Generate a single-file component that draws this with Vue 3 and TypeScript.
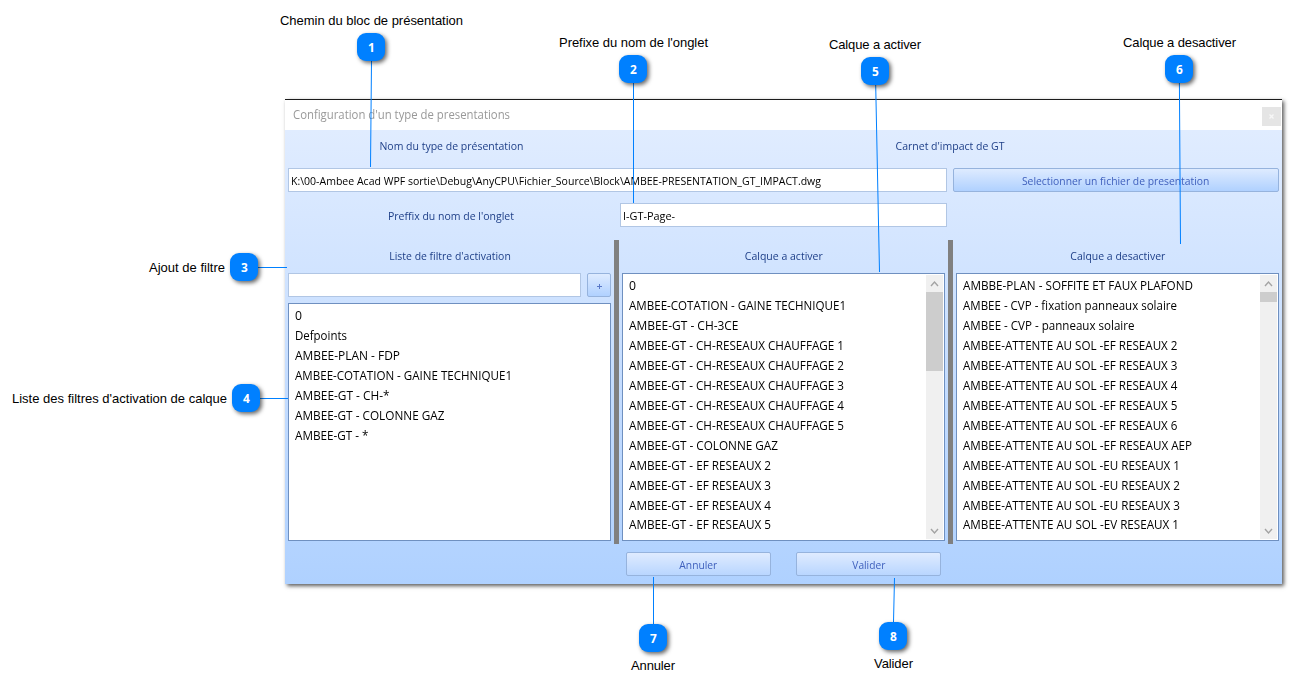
<script setup lang="ts">
type Line = { text: string; w: number }
type Callout = {
  n: number; x: number; y: number; label: string
  tx: number; ty: number; w: number; line: [number, number, number, number]
}

// Narrows or widens a label horizontally to the given width.
const vFit = {
  mounted(el: HTMLElement, binding: { value: number }) {
    const natural = el.offsetWidth ? el.getBoundingClientRect().width : 0
    if (natural) el.style.transform = `scaleX(${binding.value / natural})`
  },
}

const filters: Line[] = [
  { text: '0', w: 7 },
  { text: 'Defpoints', w: 52 },
  { text: 'AMBEE-PLAN - FDP', w: 105 },
  { text: 'AMBEE-COTATION - GAINE TECHNIQUE1', w: 217 },
  { text: 'AMBEE-GT - CH-*', w: 94.5 },
  { text: 'AMBEE-GT - COLONNE GAZ', w: 149.5 },
  { text: 'AMBEE-GT - *', w: 73.5 },
]
const enabled: Line[] = [
  { text: '0', w: 7 },
  { text: 'AMBEE-COTATION - GAINE TECHNIQUE1', w: 217 },
  { text: 'AMBEE-GT - CH-3CE', w: 109.5 },
  ...[1, 2, 3, 4, 5].map((i) => ({ text: `AMBEE-GT - CH-RESEAUX CHAUFFAGE ${i}`, w: 215 })),
  { text: 'AMBEE-GT - COLONNE GAZ', w: 149 },
  ...[2, 3, 4, 5].map((i) => ({ text: `AMBEE-GT - EF RESEAUX ${i}`, w: 142 })),
]
const disabled: Line[] = [
  { text: 'AMBBE-PLAN - SOFFITE ET FAUX PLAFOND', w: 230 },
  { text: 'AMBEE - CVP - fixation panneaux solaire', w: 214 },
  { text: 'AMBEE - CVP - panneaux solaire', w: 171.5 },
  ...[2, 3, 4, 5, 6].map((i) => ({ text: `AMBEE-ATTENTE AU SOL -EF RESEAUX ${i}`, w: 214.5 })),
  { text: 'AMBEE-ATTENTE AU SOL -EF RESEAUX AEP', w: 229 },
  ...[1, 2, 3].map((i) => ({ text: `AMBEE-ATTENTE AU SOL -EU RESEAUX ${i}`, w: 217 })),
  { text: 'AMBEE-ATTENTE AU SOL -EV RESEAUX 1', w: 216 },
]
const panels = [
  { title: 'Calque a activer', w: 78, items: enabled, thumb: 79 },
  { title: 'Calque a desactiver', w: 95, items: disabled, thumb: 10 },
]

const callouts: Callout[] = [
  { n: 1, x: 357, y: 33, label: 'Chemin du bloc de présentation', tx: 280, ty: 25, w: 183, line: [371.5, 61, 370.5, 167] },
  { n: 2, x: 619, y: 55, label: "Prefixe du nom de l'onglet", tx: 559, ty: 47, w: 149, line: [633.5, 83, 633.5, 203] },
  { n: 3, x: 230, y: 253, label: 'Ajout de filtre', tx: 149, ty: 272, w: 76, line: [258, 267.5, 287, 267.5] },
  { n: 4, x: 232, y: 384, label: "Liste des filtres d'activation de calque", tx: 12, ty: 403, w: 215, line: [260, 398.5, 288, 398.5] },
  { n: 5, x: 861, y: 57, label: 'Calque a activer', tx: 829, ty: 49, w: 92, line: [875.7, 85, 879.5, 272] },
  { n: 6, x: 1165, y: 55, label: 'Calque a desactiver', tx: 1123, ty: 47, w: 113, line: [1179.4, 83, 1180.5, 244] },
  { n: 7, x: 639, y: 624, label: 'Annuler', tx: 631, ty: 670, w: 44, line: [653.5, 577, 653.5, 624] },
  { n: 8, x: 879, y: 622, label: 'Valider', tx: 874, ty: 668, w: 39, line: [894.5, 578, 893.5, 622] },
]
</script>

<template>
  <main class="page">
    <section class="window">
      <header class="titlebar">
        <span v-fit="217" class="fit left">Configuration d'un type de presentations</span>
        <span class="close">
          <svg width="5" height="5" viewBox="0 0 5 5"><path d="M.5 .5 4.5 4.5M4.5 .5 .5 4.5" stroke="#f7f7f7" stroke-width="1.3" /></svg>
        </span>
      </header>
      <div class="body">
        <div class="row names">
          <div class="third"><span v-fit="144" class="fit">Nom du type de présentation</span></div>
          <div class="rest"><span v-fit="109" class="fit">Carnet d'impact de GT</span></div>
        </div>
        <div class="row source">
          <div class="field path"><span v-fit="530" class="fit left">K:\00-Ambee Acad WPF sortie\Debug\AnyCPU\Fichier_Source\Block\AMBEE-PRESENTATION_GT_IMPACT.dwg</span></div>
          <div class="btn pick"><span v-fit="187.5" class="fit">Selectionner un fichier de presentation</span></div>
        </div>
        <div class="row prefix">
          <div class="third"><span v-fit="126" class="fit">Preffix du nom de l'onglet</span></div>
          <div class="field short"><span v-fit="52" class="fit left">I-GT-Page-</span></div>
        </div>
        <div class="columns">
          <div class="column">
            <div class="head"><span v-fit="121.5" class="fit">Liste de filtre d'activation</span></div>
            <div class="adder">
              <div class="field add"></div>
              <div class="btn plus"><svg width="5" height="5" viewBox="0 0 5 5"><path d="M2.5 0v5M0 2.5h5" stroke="#5a78c8" /></svg></div>
            </div>
            <div class="list">
              <ul><li v-for="item in filters" :key="item.text"><span v-fit="item.w" class="fit left">{{ item.text }}</span></li></ul>
            </div>
          </div>
          <template v-for="panel in panels" :key="panel.title">
            <div class="splitter"></div>
            <div class="column">
              <div class="head"><span v-fit="panel.w" class="fit">{{ panel.title }}</span></div>
              <div class="list">
                <ul><li v-for="item in panel.items" :key="item.text"><span v-fit="item.w" class="fit left">{{ item.text }}</span></li></ul>
                <div class="scroll">
                  <svg width="17" height="17"><path d="m5 11 3.5-4 3.5 4" fill="none" stroke="#a3a3a3" stroke-width="1.4" /></svg>
                  <div class="thumb" :style="{ height: panel.thumb + 'px' }"></div>
                  <svg class="down" width="17" height="17"><path d="m5 7 3.5 4 3.5-4" fill="none" stroke="#a3a3a3" stroke-width="1.4" /></svg>
                </div>
              </div>
            </div>
          </template>
        </div>
        <footer class="actions">
          <div class="btn"><span v-fit="38" class="fit">Annuler</span></div>
          <div class="btn"><span v-fit="33" class="fit">Valider</span></div>
        </footer>
      </div>
    </section>

    <svg class="callouts" width="1292" height="689" viewBox="0 0 1292 689">
      <g v-for="c in callouts" :key="c.n">
        <line :x1="c.line[0]" :y1="c.line[1]" :x2="c.line[2]" :y2="c.line[3]" />
        <rect class="badge" :x="c.x" :y="c.y" width="28" height="28" rx="9" />
        <text class="num" :x="c.x + 11" :y="c.y + 18.5" textLength="6.8" lengthAdjust="spacingAndGlyphs">{{ c.n }}</text>
        <text class="label" :x="c.tx" :y="c.ty" :textLength="c.w">{{ c.label }}</text>
      </g>
    </svg>
  </main>
</template>

<style>
body { margin: 0; background: #fff; }
</style>

<style scoped>
.page {
  position: relative;
  box-sizing: border-box;
  width: 1292px;
  height: 689px;
  padding: 99px 0 0 285px;
  overflow: hidden;
  background: #fff;
  font-family: "Open Sans", "Noto Sans", sans-serif;
  font-size: 11px;
  color: #1e3f88;
}
.window {
  box-sizing: border-box;
  width: 997px;
  height: 485px;
  border-top: 1px solid #1c1c1c;
  box-shadow: 2px 2px 4px rgba(0, 0, 0, .65);
}
.fit { display: inline-block; flex: none; white-space: pre; line-height: 16px; transform-origin: center; }
.fit.left { transform-origin: left center; }
.titlebar {
  box-sizing: border-box;
  display: flex;
  justify-content: space-between;
  height: 30px;
  padding: 7px 1px 0 8px;
  background: #fff;
  color: #999;
  font-size: 12px;
}
.close { display: flex; align-items: center; justify-content: center; width: 19px; height: 19px; background: #e5e5e5; }
.body { height: 454px; background: linear-gradient(#e0ecff, #afd1ff); }
.row { display: flex; }
.third { display: flex; align-items: center; justify-content: center; width: 332px; }
.rest { display: flex; align-items: center; justify-content: center; flex: 1; padding-left: 1px; }
.names { height: 32px; }
.source { gap: 6px; padding: 6px 3px 0; }
.prefix { gap: 3px; padding-top: 11px; }
.prefix .third { box-sizing: border-box; padding-top: 2px; }
.field { box-sizing: border-box; display: flex; align-items: center; height: 24px; padding: 2px 2px 0; border: 1px solid #b1c6e4; background: #fff; color: #000; }
.path { width: 659px; }
.short { width: 327px; }
.btn {
  box-sizing: border-box;
  display: flex;
  align-items: center;
  justify-content: center;
  height: 24px;
  padding-top: 2px;
  border: 1px solid #96b3dd;
  border-radius: 2px;
  background: linear-gradient(#deebff, #b0d1ff);
  color: #3f60bd;
}
.pick { width: 326px; }
.columns { display: flex; height: 304px; margin-top: 13px; }
.column { box-sizing: border-box; display: flex; flex-direction: column; width: 329px; padding: 0 3px 3px; }
.splitter { width: 5px; background: #808080; }
.head { box-sizing: border-box; display: flex; align-items: center; justify-content: center; height: 33px; padding: 0 0 1px 1px; }
.adder { display: flex; gap: 6px; margin-bottom: 6px; }
.add { width: 293px; }
.plus { width: 24px; }
.list { box-sizing: border-box; display: flex; flex: 1; min-height: 0; padding: 1px; border: 1px solid #6f90c0; background: #fff; }
.list ul { flex: 1; min-width: 0; margin: 0; padding: 1px 0 0 5px; list-style: none; overflow: hidden; color: #000; font-size: 12px; }
.list li { display: flex; align-items: center; height: 20px; }
.list li:nth-child(13) { height: 18px; }
.scroll { display: flex; flex-direction: column; width: 17px; background: #f0f0f0; }
.scroll svg { display: block; flex: none; }
.thumb { flex: none; background: #cdcdcd; }
.down { margin-top: auto; }
.actions { display: flex; gap: 25px; padding: 8px 0 0 341px; }
.actions .btn { width: 145px; background: linear-gradient(#dfebff, #b9d6ff); }
.callouts { position: absolute; inset: 0; }
.callouts line { stroke: #0080ff; stroke-width: 1; }
.badge { fill: #0080ff; filter: drop-shadow(2px 2px 2px rgba(0, 0, 0, .6)); }
.num { fill: #fff; font: bold 12px "Open Sans", sans-serif; }
.label { fill: #000; font: 13px "Liberation Sans", sans-serif; }
</style>
